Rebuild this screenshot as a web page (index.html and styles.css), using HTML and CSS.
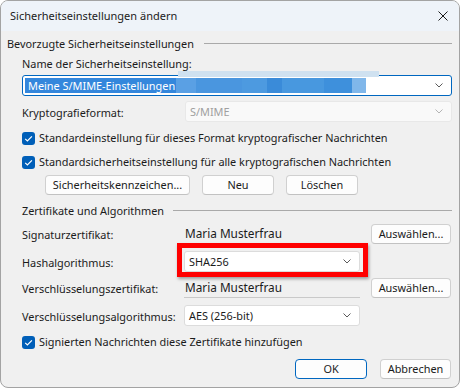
FILE: index.html
```html
<!DOCTYPE html>
<html lang="de">
<head>
<meta charset="utf-8">
<title>Sicherheitseinstellungen ändern</title>
<link rel="stylesheet" href="styles.css">
</head>
<body>
<div class="window">
  <div class="titlebar">
    <span class="title">Sicherheitseinstellungen ändern</span>
    <svg class="close" viewBox="0 0 10 10" width="10" height="10"><path d="M0.5 0.5 L9.5 9.5 M9.5 0.5 L0.5 9.5" stroke="#1b1b1b" stroke-width="1" fill="none"/></svg>
  </div>
  <div class="body">
    <div class="group-head"><span>Bevorzugte Sicherheitseinstellungen</span><i class="rule"></i></div>
    <div class="section">
      <div class="label-line">Name der Sicherheitseinstellung:</div>
      <div class="combo focused">
        <span class="band"></span>
        <span class="sel">Meine S/MIME-Einstellungen</span>
        <span class="redact"><i class="r1"></i><i class="r2"></i><i class="r3"></i><i class="r4"></i><i class="r5"></i><i class="r6"></i><i class="r7"></i></span>
        <svg class="chev" viewBox="0 0 8 5" width="8" height="5"><path d="M0.5 0.5 L4 4 L7.5 0.5" stroke="#5a5a5a" stroke-width="1" fill="none"/></svg>
      </div>
      <div class="krow">
        <span class="lbl">Kryptografieformat:</span>
        <div class="combo disabled"><span class="ctext">S/MIME</span><svg class="chev" viewBox="0 0 8 5" width="8" height="5"><path d="M0.5 0.5 L4 4 L7.5 0.5" stroke="#b4b4b4" stroke-width="1" fill="none"/></svg></div>
      </div>
      <div class="check"><span class="box"><svg viewBox="0 0 13 13" width="13" height="13"><path d="M3.2 6.8 L5.4 9 L9.9 4.3" stroke="#fff" stroke-width="1.2" fill="none"/></svg></span><span>Standardeinstellung für dieses Format kryptografischer Nachrichten</span></div>
      <div class="check"><span class="box"><svg viewBox="0 0 13 13" width="13" height="13"><path d="M3.2 6.8 L5.4 9 L9.9 4.3" stroke="#fff" stroke-width="1.2" fill="none"/></svg></span><span>Standardsicherheitseinstellung für alle kryptografischen Nachrichten</span></div>
      <div class="btnrow">
        <span class="btn w145">Sicherheitskennzeichen...</span>
        <span class="btn w72">Neu</span>
        <span class="btn w72">Löschen</span>
      </div>
    </div>
    <div class="group-head g2"><span>Zertifikate und Algorithmen</span><i class="rule r-narrow"></i></div>
    <div class="section">
      <div class="frow f1">
        <span class="lbl">Signaturzertifikat:</span>
        <span class="value">Maria Musterfrau</span>
        <span class="btn w80 end">Auswählen...</span>
      </div>
      <div class="frow f2">
        <span class="lbl">Hashalgorithmus:</span>
        <div class="hashcell">
          <div class="combo"><span class="ctext">SHA256</span><svg class="chev" viewBox="0 0 8 5" width="8" height="5"><path d="M0.5 0.5 L4 4 L7.5 0.5" stroke="#5a5a5a" stroke-width="1" fill="none"/></svg></div>
          <span class="mark"></span>
        </div>
      </div>
      <div class="frow f3">
        <span class="lbl">Verschlüsselungszertifikat:</span>
        <span class="value">Maria Musterfrau</span>
        <span class="btn w80 end">Auswählen...</span>
      </div>
      <div class="frow f4">
        <span class="lbl">Verschlüsselungsalgorithmus:</span>
        <div class="combo"><span class="ctext">AES (256-bit)</span><svg class="chev" viewBox="0 0 8 5" width="8" height="5"><path d="M0.5 0.5 L4 4 L7.5 0.5" stroke="#5a5a5a" stroke-width="1" fill="none"/></svg></div>
      </div>
      <div class="check c3"><span class="box"><svg viewBox="0 0 13 13" width="13" height="13"><path d="M3.2 6.8 L5.4 9 L9.9 4.3" stroke="#fff" stroke-width="1.2" fill="none"/></svg></span><span>Signierten Nachrichten diese Zertifikate hinzufügen</span></div>
    </div>
    <div class="footer">
      <span class="btn w72 default">OK</span>
      <span class="btn w71">Abbrechen</span>
    </div>
  </div>
</div>
</body>
</html>
```
FILE: styles.css
```css
* { box-sizing: border-box; }
html, body { margin: 0; padding: 0; background: #ffffff; }
body {
  font-family: "Noto Sans", "Open Sans", sans-serif;
  font-size: 10.9px;
  color: #1b1b1b;
  line-height: 16px;
}
.window {
  width: 460px;
  height: 388px;
  border: 1px solid #a3a3a3;
  border-radius: 8px;
  background: #f0f0f0;
  overflow: hidden;
  display: flex;
  flex-direction: column;
}
.titlebar {
  height: 30px;
  flex: none;
  background: #eef3f9;
  display: flex;
  align-items: center;
  padding: 0 11px 0 9px;
}
.title { flex: 1; font-size: 11px; }
.close { display: block; }
.body { padding: 5px 7px 0 6px; }
.group-head { display: flex; align-items: center; height: 16px; }
.group-head.g2 { margin: 8px 0 0 15px; }
.rule { flex: 1; height: 1px; background: #a9a9a9; margin-left: 10px; margin-top: -1px; }
.r-narrow { margin-left: 9px; }
.section { margin-left: 15px; }
.label-line { margin-top: 4px; height: 16px; }
.combo {
  height: 21px;
  background: #ffffff;
  border: 1px solid #dcdcdc;
  border-radius: 3px;
  display: flex;
  align-items: center;
  padding: 0 8px 0 4px;
  position: relative;
}
.combo .chev { margin-left: auto; display: block; }
.combo.focused { margin-top: 3px; border-color: #0067c0; padding-left: 2px; }
.sel {
  background: #3487dc;
  color: #ffffff;
  height: 15px;
  line-height: 15px;
  padding: 0 1px 0 3px;
}
.redact { display: flex; height: 15px; }
.redact i { display: block; height: 15px; }
.r1 { width: 20px; background: #5aa0e4; }
.r2 { width: 46px; background: #4a96df; }
.r3 { width: 25px; background: #4d9ae0; }
.r4 { width: 15px; background: #3a8bd9; }
.r5 { width: 42px; background: #4898df; }
.r6 { width: 28px; background: #3e90dc; }
.r7 { width: 14px; background: #80b7ea; }
.band {
  position: absolute;
  left: 155px;
  top: -5px;
  width: 201px;
  height: 6px;
  background: #cfe1f0;
}
.krow {
  display: grid;
  grid-template-columns: 163px 1fr;
  align-items: center;
  height: 21px;
  margin-top: 5px;
}
.krow .lbl { padding-top: 3px; }
.combo.disabled { background: #f9f9f9; border-color: #e8e8e8; color: #a0a0a0; }
.ctext { white-space: nowrap; }
.check { display: flex; align-items: center; height: 16px; margin-top: 8px; gap: 4px; }
.check.c3 { margin-top: 8px; }
.box {
  width: 13px;
  height: 13px;
  background: #005fb8;
  border-radius: 3px;
  display: block;
  flex: none;
}
.box svg { display: block; }
.btnrow { display: flex; gap: 12px; margin: 5px 0 0 23px; }
.btn {
  height: 20px;
  border: 1px solid #d0d0d0;
  border-bottom-color: #c2c2c2;
  border-radius: 4px;
  background: #fdfdfd;
  display: flex;
  align-items: center;
  justify-content: center;
  white-space: nowrap;
}
.w145 { width: 145px; }
.w72 { width: 72px; }
.w71 { width: 71px; }
.w80 { width: 80px; }
.end { justify-self: end; margin-right: 1px; }
.frow {
  display: grid;
  grid-template-columns: 162px 176px 1fr;
  align-items: center;
}
.frow .lbl { padding-top: 2px; }
.f1 { margin-top: 5px; height: 20px; }
.f2 { margin-top: 7px; height: 21px; }
.f3 { margin-top: 6px; height: 20px; }
.f4 { margin-top: 7px; height: 21px; }
.f4 .lbl { padding-top: 3px; }
.value {
  font-size: 11.8px;
  height: 20px;
  line-height: 18px;
  padding-left: 1px;
  border-bottom: 1px solid #c9c9c9;
}
.f1 .value { border-bottom-color: transparent; }
.hashcell { position: relative; }
.mark {
  position: absolute;
  left: -7px;
  right: -8px;
  top: -8px;
  bottom: -5px;
  border: 5px solid #ff0000;
  box-shadow: 1px 2px 3px rgba(0, 0, 0, 0.35);
}
.footer {
  display: flex;
  justify-content: flex-end;
  gap: 13px;
  margin-top: 9px;
  padding-right: 1px;
}
.btn.default { border: 1px solid #0067c0; }
```
